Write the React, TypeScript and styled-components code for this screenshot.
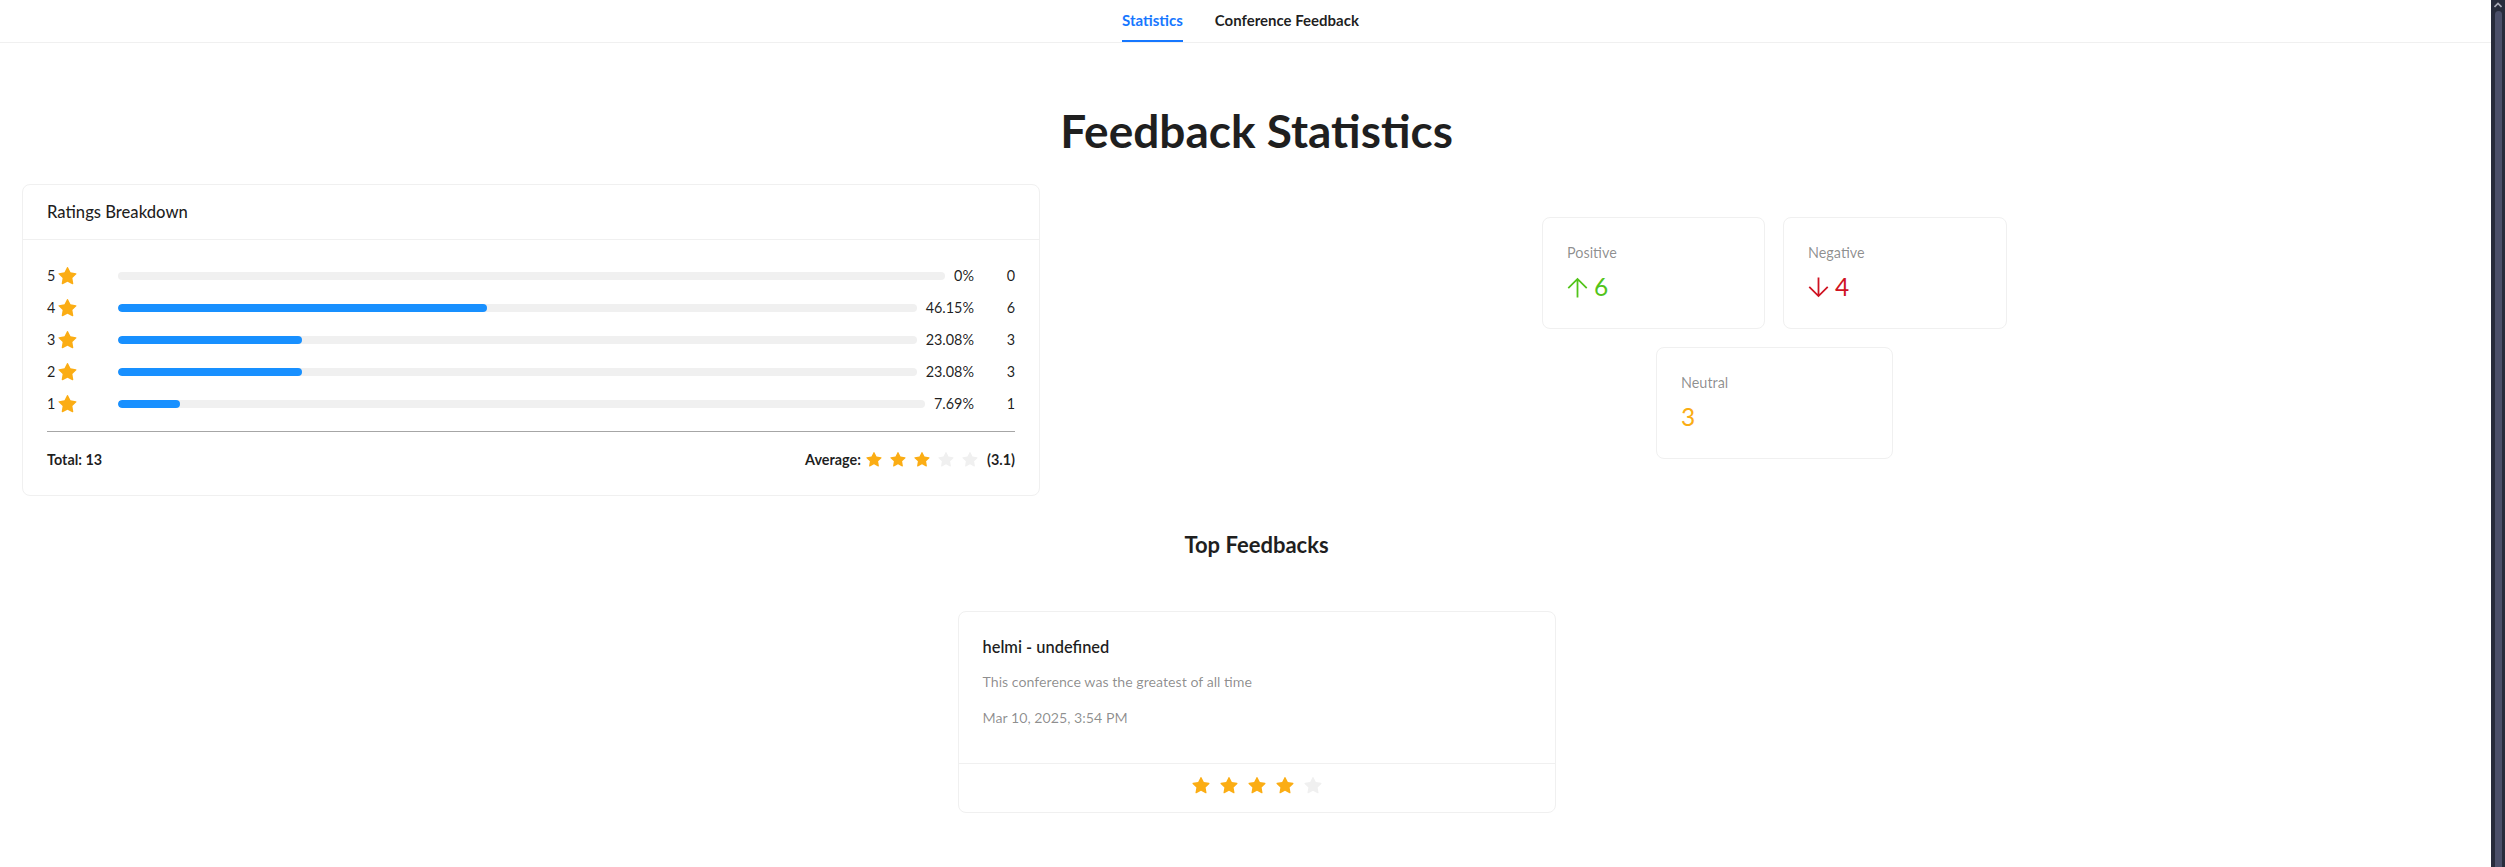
import React from "react";
import styled, { createGlobalStyle } from "styled-components";

const GlobalStyle = createGlobalStyle`
  html, body {
    margin: 0;
    padding: 0;
    background: #ffffff;
  }
  body {
    font-family: "Lato", "Open Sans", "Noto Sans", sans-serif;
    color: rgba(0, 0, 0, 0.88);
    font-size: 14px;
  }
  * { box-sizing: border-box; }
`;

const Page = styled.div`
  display: flex;
  min-height: 100vh;
  width: 100%;
`;

const Main = styled.main`
  flex: 1;
  min-width: 0;
`;

const Nav = styled.nav`
  display: flex;
  justify-content: center;
  padding-right: 10px;
  border-bottom: 1px solid #f0f0f0;
`;

const TabList = styled.div`
  display: flex;
  gap: 32px;
`;

const Tab = styled.div<{ $active?: boolean }>`
  padding: 9px 0;
  line-height: 22px;
  font-size: 15px;
  font-weight: 700;
  color: ${(p) => (p.$active ? "#1677ff" : "rgba(0,0,0,0.88)")};
  border-bottom: 2px solid ${(p) => (p.$active ? "#1677ff" : "transparent")};
  cursor: pointer;
`;

const Content = styled.div`
  padding-left: 22px;
`;

const Title = styled.h1`
  margin: 60px 0 25px;
  text-align: center;
  font-size: 46px;
  line-height: 56px;
  font-weight: 700;
  color: #1f1f1f;
`;

const StatsGrid = styled.div`
  display: grid;
  grid-template-columns: 1018px 1fr;
  gap: 18px;
`;

const Card = styled.div`
  background: #fff;
  border: 1px solid #f0f0f0;
  border-radius: 8px;
`;

const CardHead = styled.div`
  height: 55px;
  display: flex;
  align-items: center;
  padding: 0 24px;
  border-bottom: 1px solid #f0f0f0;
`;

const CardTitle = styled.div`
  font-size: 16.6px;
  font-weight: 500;
  color: rgba(0, 0, 0, 0.88);
`;

const CardBody = styled.div`
  padding: 25px 24px 24px;
`;

const RatingList = styled.div`
  display: flex;
  flex-direction: column;
  gap: 10px;
`;

const RatingRow = styled.div`
  display: grid;
  grid-template-columns: 71px 1fr 41px;
  align-items: center;
  height: 22px;
`;

const RatingLabel = styled.div`
  display: flex;
  align-items: center;
  gap: 3px;
  font-size: 14.4px;
  line-height: 22px;
`;

const Progress = styled.div`
  display: flex;
  align-items: center;
`;

const Track = styled.div`
  flex: 1;
  height: 8px;
  border-radius: 100px;
  background: #f0f0f0;
  overflow: hidden;
`;

const Fill = styled.div`
  height: 100%;
  border-radius: 100px;
  background: #1890ff;
`;

const PercentText = styled.span`
  margin-left: 9px;
  font-size: 14.4px;
  line-height: 22px;
  white-space: nowrap;
  color: rgba(0, 0, 0, 0.88);
`;

const Count = styled.span`
  text-align: right;
  font-size: 14.4px;
  line-height: 22px;
`;

const Divider = styled.hr`
  margin: 16px 0 17px;
  border: 0;
  border-top: 1px solid #a6a6a6;
  height: 0;
`;

const SummaryRow = styled.div`
  display: flex;
  justify-content: space-between;
  align-items: center;
  line-height: 22px;
`;

const Strong = styled.strong`
  font-size: 14.4px;
  font-weight: 700;
  color: rgba(0, 0, 0, 0.88);
`;

const AverageGroup = styled.div`
  display: flex;
  align-items: center;
`;

const RateGroup = styled.div<{ $gap: number }>`
  display: flex;
  align-items: center;
  gap: ${(p) => p.$gap}px;
`;

const AverageStars = styled(RateGroup)`
  margin: 0 9px 0 5px;
`;

const StatsColumn = styled.div`
  padding-top: 33px;
  display: flex;
  flex-direction: column;
  align-items: center;
  gap: 18px;
`;

const StatRow = styled.div`
  display: flex;
  justify-content: center;
  gap: 18px;
`;

const StatCard = styled(Card)<{ $width: number }>`
  width: ${(p) => p.$width}px;
  height: 112px;
  padding: 24px;
`;

const StatLabel = styled.div`
  font-size: 14.4px;
  line-height: 22px;
  color: rgba(0, 0, 0, 0.45);
  margin-bottom: 4px;
`;

const StatValue = styled.div<{ $color: string }>`
  display: flex;
  align-items: center;
  gap: 6px;
  font-size: 24.5px;
  line-height: 38px;
  color: ${(p) => p.$color};
`;

const SectionTitle = styled.h3`
  margin: 35px 0 52px;
  text-align: center;
  font-size: 22px;
  line-height: 28px;
  font-weight: 700;
  color: #1f1f1f;
`;

const FeedbackCard = styled(Card)`
  width: 598px;
  margin: 0 auto;
`;

const FeedbackBody = styled.div`
  padding: 23px 24px 34px;
`;

const FeedbackName = styled.div`
  font-size: 16.4px;
  line-height: 24px;
  font-weight: 600;
  color: rgba(0, 0, 0, 0.88);
`;

const FeedbackText = styled.div<{ $gap: number }>`
  margin-top: ${(p) => p.$gap}px;
  font-size: 14.2px;
  line-height: 22px;
  color: rgba(0, 0, 0, 0.45);
`;

const FeedbackActions = styled.div`
  border-top: 1px solid #f0f0f0;
  height: 49px;
  padding-bottom: 4px;
  display: flex;
  justify-content: center;
  align-items: center;
`;

const Scrollbar = styled.aside`
  width: 14px;
  flex: 0 0 14px;
  background: #272b3b;
  display: flex;
  flex-direction: column;
  align-items: center;
  padding-top: 2px;
`;

const ScrollThumb = styled.div`
  margin-top: 3px;
  width: 7px;
  flex: 1;
  border-radius: 4px 4px 0 0;
  background: #4b4f69;
`;

const STAR_PATH =
  "M908.1 353.1l-253.9-36.9L540.7 86.1c-3.1-6.3-8.2-11.4-14.5-14.5-15.8-7.8-35-1.3-42.9 14.5L369.8 316.2l-253.9 36.9c-7 1-13.4 4.3-18.3 9.3a32.05 32.05 0 00.6 45.3l183.7 179.1-43.4 252.9a31.95 31.95 0 0046.4 33.7L512 754l227.1 119.4c6.2 3.3 13.4 4.4 20.3 3.2 17.4-3 29.1-19.5 26.1-36.9l-43.4-252.9 183.7-179.1c5-4.9 8.3-11.3 9.3-18.3 2.7-17.5-9.5-33.7-27-36.3z";

const Star = ({ size, filled = true }: { size: number; filled?: boolean }) => (
  <svg width={size} height={size} viewBox="64 64 896 896" style={{ display: "block" }}>
    <path d={STAR_PATH} fill={filled ? "#fbad14" : "#f0f0f0"} />
  </svg>
);

const Stars = ({ value, size, gap }: { value: number; size: number; gap: number }) => (
  <RateGroup $gap={gap}>
    {[1, 2, 3, 4, 5].map((i) => (
      <Star key={i} size={size} filled={i <= value} />
    ))}
  </RateGroup>
);

const ArrowUp = ({ color }: { color: string }) => (
  <svg width="21" height="21" viewBox="0 0 20 20" fill="none" stroke={color} strokeWidth="1.7" strokeLinecap="butt">
    <path d="M10 19.5V1.8M1.2 10.6L10 1.8l8.8 8.8" />
  </svg>
);

const ArrowDown = ({ color }: { color: string }) => (
  <svg width="21" height="21" viewBox="0 0 20 20" fill="none" stroke={color} strokeWidth="1.7" strokeLinecap="butt">
    <path d="M10 0.5v17.7M1.2 9.4L10 18.2l8.8-8.8" />
  </svg>
);

const ChevronUp = () => (
  <svg width="8" height="6" viewBox="0 0 8 6">
    <path d="M0.5 5L4 1.5 7.5 5" fill="none" stroke="#a9abb8" strokeWidth="1.6" />
  </svg>
);

const ratings = [
  { stars: 5, percent: 0, label: "0%", count: 0 },
  { stars: 4, percent: 46.15, label: "46.15%", count: 6 },
  { stars: 3, percent: 23.08, label: "23.08%", count: 3 },
  { stars: 2, percent: 23.08, label: "23.08%", count: 3 },
  { stars: 1, percent: 7.69, label: "7.69%", count: 1 },
];

export default function App() {
  return (
    <>
      <GlobalStyle />
      <Page>
        <Main>
          <Nav>
            <TabList>
              <Tab $active>Statistics</Tab>
              <Tab>Conference Feedback</Tab>
            </TabList>
          </Nav>
          <Content>
            <Title>Feedback Statistics</Title>
            <StatsGrid>
              <Card>
                <CardHead>
                  <CardTitle>Ratings Breakdown</CardTitle>
                </CardHead>
                <CardBody>
                  <RatingList>
                    {ratings.map((r) => (
                      <RatingRow key={r.stars}>
                        <RatingLabel>
                          {r.stars}
                          <Star size={19} />
                        </RatingLabel>
                        <Progress>
                          <Track>
                            <Fill style={{ width: `${r.percent}%` }} />
                          </Track>
                          <PercentText>{r.label}</PercentText>
                        </Progress>
                        <Count>{r.count}</Count>
                      </RatingRow>
                    ))}
                  </RatingList>
                  <Divider />
                  <SummaryRow>
                    <Strong>Total: 13</Strong>
                    <AverageGroup>
                      <Strong>Average:</Strong>
                      <AverageStars $gap={8}>
                        {[1, 2, 3, 4, 5].map((i) => (
                          <Star key={i} size={16} filled={i <= 3} />
                        ))}
                      </AverageStars>
                      <Strong>(3.1)</Strong>
                    </AverageGroup>
                  </SummaryRow>
                </CardBody>
              </Card>
              <StatsColumn>
                <StatRow>
                  <StatCard $width={223}>
                    <StatLabel>Positive</StatLabel>
                    <StatValue $color="#52c41a">
                      <ArrowUp color="#52c41a" />6
                    </StatValue>
                  </StatCard>
                  <StatCard $width={224}>
                    <StatLabel>Negative</StatLabel>
                    <StatValue $color="#cf1322">
                      <ArrowDown color="#cf1322" />4
                    </StatValue>
                  </StatCard>
                </StatRow>
                <StatRow>
                  <StatCard $width={237}>
                    <StatLabel>Neutral</StatLabel>
                    <StatValue $color="#faad14">3</StatValue>
                  </StatCard>
                </StatRow>
              </StatsColumn>
            </StatsGrid>
            <SectionTitle>Top Feedbacks</SectionTitle>
            <FeedbackCard>
              <FeedbackBody>
                <FeedbackName>helmi - undefined</FeedbackName>
                <FeedbackText $gap={12}>This conference was the greatest of all time</FeedbackText>
                <FeedbackText $gap={14}>Mar 10, 2025, 3:54 PM</FeedbackText>
              </FeedbackBody>
              <FeedbackActions>
                <Stars value={4} size={18} gap={10} />
              </FeedbackActions>
            </FeedbackCard>
          </Content>
        </Main>
        <Scrollbar>
          <ChevronUp />
          <ScrollThumb />
        </Scrollbar>
      </Page>
    </>
  );
}
